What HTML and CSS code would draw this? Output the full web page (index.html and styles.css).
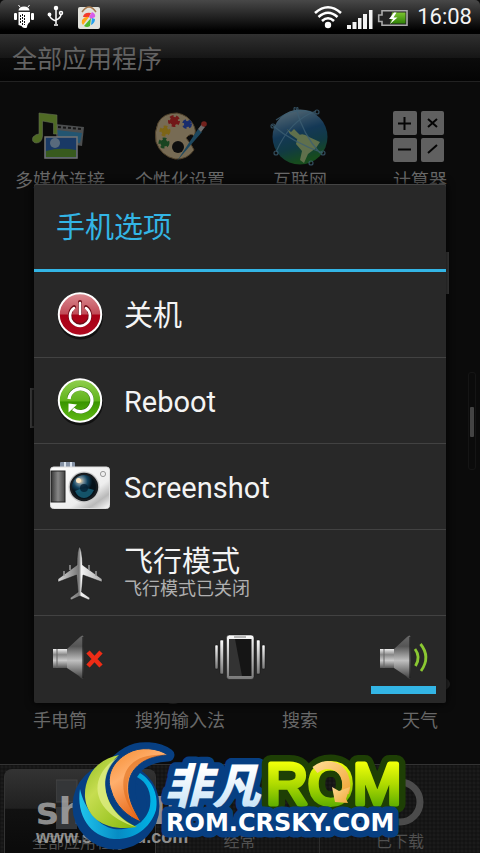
FILE: index.html
```html
<!DOCTYPE html>
<html lang="zh-CN">
<head>
<meta charset="utf-8">
<meta name="viewport" content="width=device-width, initial-scale=1">
<title>手机选项</title>
<link rel="stylesheet" href="styles.css">
</head>
<body>
<header class="status">
  <div class="status-group">
    <svg width="22" height="26" viewBox="13 4 22 26"><g fill="#fff"><path d="M18.500 10.500Q19 6.500 24 6.500Q29 6.500 29.500 10.500Z"/><path d="M18.500 12H30V22Q27 24 27 27.500Q23 29 21.500 26L18.500 25Z"/><rect x="14" y="13" width="3" height="7" rx="1"/><rect x="31" y="13" width="3" height="7" rx="1"/></g><path d="M20 7L18.500 5M28 7L29.500 5" stroke="#fff"/><path d="M20.500 15V24M22.500 14V25M24.500 15V25" stroke="#111" stroke-dasharray="2 1"/></svg>
    <svg width="18" height="26" viewBox="47 4 18 26" fill="none" stroke="#fff" stroke-width="1.500"><path d="M56 8V24M56 21Q50 19 49.500 15M56 20Q61 18 61 14"/><circle cx="56" cy="8" r="1.500" fill="#fff"/><circle cx="49.500" cy="14.500" r="1.200" fill="#fff"/><circle cx="61" cy="13" r="1.500"/><path d="M54 25H58"/></svg>
    <svg width="24" height="26" viewBox="76 4 24 26"><rect x="77" y="7" width="22" height="22" rx="2" fill="#e2e2dc"/><path d="M81 12Q88 2 95 12" fill="none" stroke="#a87b50" stroke-width="1.500"/><path d="M82 17Q83 12 90 13L88 17Z" fill="#f33b2b"/><path d="M88 17L91 12Q95 14 94 17L90 19Z" fill="#d75dea"/><path d="M81 20Q84 16 88 17L82 25Q80 23 81 20Z" fill="#ffa719"/><path d="M83 26L90 18L89 26Q86 28 83 26Z" fill="#4fba2d"/><path d="M90 25L91 18L94 19Q94 23 90 25Z" fill="#27a0ee"/></svg>
  </div>
  <div class="status-group status-right">
    <svg width="30" height="26" viewBox="315 4 30 26"><g fill="none" stroke="#fff" stroke-width="2.600"><path d="M317 13Q330 1.500 343 13"/><path d="M320.500 17Q330 8.500 339.500 17"/><path d="M324 21Q330 15.500 336 21"/></g><circle cx="330" cy="25" r="3.200" fill="#fff"/></svg>
    <svg width="26" height="26" viewBox="349 4 26 26" fill="#f1f1f1"><path d="M349 25h4v4h-4zM354.500 22h4v7h-4zM360 18h3.500v11H360zM365 14h4v15h-4zM371 10h3.500v19H371z"/></svg>
    <svg width="32" height="26" viewBox="378 4 32 26"><defs><linearGradient id="bat" x2="0" y2="1"><stop stop-color="#7cc52f"/><stop offset="1" stop-color="#2f8206"/></linearGradient></defs><path d="M383 10.700H408V25.300H383V21.500H379.700V15H383Z" fill="#222" stroke="#aaa" stroke-width="1.600"/><path d="M393 12.500H406.500V23.500H391Z" fill="url(#bat)"/><path d="M395 12.500L390 19H394L391 24L398.500 17.500H394.500L397.500 12.500Z" fill="#fff"/></svg>
    <time class="clock">16:08</time>
  </div>
</header>
<header class="titlebar"><h1>全部应用程序</h1></header>

<main class="apps">
  <a class="app" href="#">
    <svg width="60" height="60" viewBox="30 107 60 60"><path d="M55 124L84 127L82 146L57 142Z" fill="#8d9093"/><path d="M57 130L82 133L80 143L59 141Z" fill="#3c9ed6"/><path d="M58 127L82 129" stroke="#222" stroke-width="2" stroke-dasharray="3 2"/><path d="M39 113L57 115V134H53.500V123L42.500 121V136Q42 143 36 143Q31 142 33 137Q36 134 39 134Z" fill="#92c83d" stroke="#b9cf98" stroke-width=".600"/><rect x="45" y="137" width="32" height="21" fill="#2868be" stroke="#ddd" stroke-width="1.500"/><circle cx="55" cy="143" r="5" fill="#d8f2ff" opacity=".7"/><path d="M46 151Q60 147 76 150V157H46Z" fill="#65a832"/></svg>
    <span class="label">多媒体连接</span>
  </a>
  <a class="app" href="#">
    <svg width="60" height="60" viewBox="150 107 60 60"><path d="M158 123Q163 113 177 113Q188 115 193 124Q197 131 194 136Q191 132 186 138Q192 145 194 150Q187 160 175 159Q161 156 156 142Q154 132 158 123Z" fill="#e3ca9c" stroke="#957a4d"/><circle cx="178" cy="147" r="6" fill="#111"/><g stroke-width="4" stroke-dasharray="3 2"><circle cx="174" cy="121" r="4" fill="#d82625" stroke="#d82625"/><circle cx="187" cy="124" r="3" fill="#2850cf" stroke="#2850cf"/><circle cx="165" cy="131" r="3.500" fill="#efbe23" stroke="#efbe23"/><circle cx="164" cy="143" r="3.500" fill="#277e37" stroke="#277e37"/></g><path d="M177 161L198 129L202 132Z" fill="#2f83b1"/><path d="M198 129L202 124L205 127L201 132Z" fill="#ccc"/><circle cx="204" cy="124" r="2.800" fill="#d8372d"/></svg>
    <span class="label">个性化设置</span>
  </a>
  <a class="app" href="#">
    <svg width="60" height="60" viewBox="270 107 60 60"><defs><linearGradient id="globe" x2=".3" y2="1"><stop stop-color="#b6d5e6"/><stop offset=".5" stop-color="#1d66a0"/><stop offset=".75" stop-color="#176a7c"/><stop offset="1" stop-color="#238c31"/></linearGradient></defs><circle cx="300" cy="137" r="27.500" fill="url(#globe)"/><path d="M287 129L291 132L294 129L300 135L297 139L290 134ZM298 136Q302 132 309 137L320 142L316 148L308 154L304 163L300 160L302 151L296 144Z" fill="#b4d48c"/><g fill="none" stroke="#6db0d8" stroke-width="1.200" opacity=".8"><path d="M272 125Q292 142 323 153M296 108Q303 135 320 153M316 111Q290 120 276 152M276 120Q296 105 317 114"/><circle cx="296" cy="109" r="2"/><circle cx="317" cy="112" r="2"/><circle cx="273" cy="126" r="2"/><circle cx="323" cy="153" r="2"/><circle cx="276" cy="153" r="2"/><circle cx="311" cy="163" r="2"/></g></svg>
    <span class="label">互联网</span>
  </a>
  <a class="app" href="#">
    <svg width="60" height="60" viewBox="390 107 60 60"><g fill="#b5b5b5"><rect x="393" y="111" width="24" height="24" rx="2"/><rect x="421" y="111" width="23" height="24" rx="2"/><rect x="393" y="138" width="24" height="24" rx="2"/><rect x="421" y="138" width="23" height="24" rx="2"/></g><path d="M398 123.500H411M404.500 117V130M428 119L437 127M437 119L428 127M398 149.500H411M428 153L437 145" stroke="#000" stroke-width="2"/></svg>
    <span class="label">计算器</span>
  </a>
  <span class="app row2-end"><svg width="60" height="60" viewBox="0 0 60 60"><rect x="10" y="10" width="49" height="42" fill="#777"/></svg></span>
  <span class="app row3-start"><svg width="60" height="60" viewBox="0 0 60 60"><rect x="1" y="12" width="50" height="38" fill="#333" stroke="#777" stroke-width="2"/></svg></span>
  <a class="app row5 col1" href="#"><svg width="60" height="60" viewBox="0 0 60 60"><rect x="20" y="8" width="20" height="40" fill="#666"/></svg><span class="label">手电筒</span></a>
  <a class="app row5 col2" href="#"><svg width="60" height="60" viewBox="0 0 60 60"><ellipse cx="23" cy="40" rx="15" ry="17" fill="#555"/></svg><span class="label">搜狗输入法</span></a>
  <a class="app row5 col3" href="#"><svg width="60" height="60" viewBox="0 0 60 60"><circle cx="30" cy="25" r="18" fill="none" stroke="#666" stroke-width="5"/></svg><span class="label">搜索</span></a>
  <a class="app row5 col4" href="#"><svg width="60" height="60" viewBox="0 0 60 60"><ellipse cx="38" cy="37" rx="22" ry="10" fill="#444"/></svg><span class="label">天气</span></a>
  <div class="scroll-track"><div class="scroll-thumb"></div></div>
</main>

<nav class="tabs">
  <button class="tab active"><svg width="48" height="60" viewBox="0 0 48 60"><rect x="0" y="9" width="21" height="22" fill="#343638" stroke="#444"/><rect x="0" y="36" width="21" height="22" fill="#343638"/></svg><span>全部应用程序</span></button>
  <button class="tab"><svg width="48" height="60" viewBox="0 0 48 60"><circle cx="24" cy="32" r="20" fill="none" stroke="#3d3d3d" stroke-width="6"/></svg><span>经常</span></button>
  <button class="tab"><svg width="48" height="60" viewBox="0 0 48 60"><circle cx="24" cy="32" r="20" fill="none" stroke="#4b4b4b" stroke-width="7"/></svg><span>已下载</span></button>
</nav>

<div class="overlay">
  <section class="dialog" role="dialog" aria-labelledby="dialog-title">
    <h2 id="dialog-title">手机选项</h2>
    <button class="option">
      <svg width="60" height="60" viewBox="50 285 60 60"><defs><linearGradient id="red" x2="0" y2="1"><stop stop-color="#dc8c93"/><stop offset=".48" stop-color="#c14b57"/><stop offset=".52" stop-color="#a90016"/><stop offset="1" stop-color="#b00a20"/></linearGradient></defs><circle cx="80.500" cy="316" r="22.500" fill="#111"/><circle cx="80" cy="313.500" r="21.200" fill="url(#red)" stroke="#fff" stroke-width="2"/><g fill="none" stroke-linecap="round"><path d="M74 306A10 10 0 1 0 86 306M80 301V312" stroke="#6e0d18" stroke-width="4"/><path d="M74 307A10 10 0 1 0 86 307M80 302V313" stroke="#fff" stroke-width="2.600"/></g></svg>
      <span class="option-text">关机</span>
    </button>
    <button class="option">
      <svg width="60" height="60" viewBox="50 371 60 60"><defs><linearGradient id="green" x2="0" y2="1"><stop stop-color="#91cf4f"/><stop offset=".5" stop-color="#62b41c"/><stop offset=".54" stop-color="#3a9500"/><stop offset="1" stop-color="#62ba16"/></linearGradient></defs><circle cx="80.500" cy="402" r="22.500" fill="#111"/><circle cx="80" cy="399.500" r="21.200" fill="url(#green)" stroke="#fff" stroke-width="2"/><path d="M69 397A11.500 11.500 0 1 1 73 408" fill="none" stroke="#286409" stroke-width="4"/><path d="M69 398A11.500 11.500 0 1 1 73 408" fill="none" stroke="#fff" stroke-width="3.400"/><path d="M68.500 402.500L77 403.500L68.500 411.500Z" fill="#fff"/></svg>
      <span class="option-text">Reboot</span>
    </button>
    <button class="option">
      <svg width="60" height="60" viewBox="50 458 60 60"><defs><linearGradient id="body" x2="1" y2="1"><stop stop-color="#fff"/><stop offset=".65" stop-color="#eee"/><stop offset=".82" stop-color="#b9b9b9"/><stop offset="1" stop-color="#fff"/></linearGradient><radialGradient id="lens" cx=".35" cy=".25"><stop stop-color="#f4d9ab"/><stop offset=".3" stop-color="#6c8796"/><stop offset=".6" stop-color="#12435f"/><stop offset="1" stop-color="#06121a"/></radialGradient><linearGradient id="grip"><stop stop-color="#333"/><stop offset=".5" stop-color="#888"/><stop offset="1" stop-color="#444"/></linearGradient></defs><rect x="60" y="462" width="15" height="7" rx="1" fill="#8592a5"/><path d="M65 462V467M71 462V467" stroke="#d9e2ed" stroke-width="2"/><rect x="50.500" y="467" width="59" height="41.500" rx="3" fill="url(#body)" stroke="#ddd"/><rect x="51" y="471" width="14" height="31" fill="url(#grip)" stroke="#222"/><circle cx="84" cy="487" r="15.500" fill="#c9c9c9"/><circle cx="84" cy="487" r="14.200" fill="#181c20"/><circle cx="84" cy="487" r="12" fill="url(#lens)"/><path d="M75 491Q84 486 94 490Q90 498 84 498Q78 498 75 491Z" fill="#1b6f8c" opacity=".7"/><circle cx="84" cy="488" r="4" fill="#051f32" opacity=".8"/><circle cx="78.500" cy="480.500" r="2.500" fill="#ffe9c6"/><circle cx="103" cy="474" r="2.600" fill="#eee" stroke="#999"/></svg>
      <span class="option-text">Screenshot</span>
    </button>
    <button class="option">
      <svg width="60" height="60" viewBox="50 544 60 60"><defs><linearGradient id="plane"><stop stop-color="#d8d8d8"/><stop offset=".48" stop-color="#777"/><stop offset=".53" stop-color="#f4f4f4"/><stop offset="1" stop-color="#aaa"/></linearGradient></defs><path d="M79.500 546.500Q82 550 82.500 565L102 579V582L83 575L81.500 592L90 598L89 600L80 596L71 600L70 598L78 592L76.500 575L58 582V579L77 565Q77 550 79.500 546.500Z" fill="url(#plane)" stroke="#111" stroke-width=".500"/><path d="M70 565V570M64 571V576M89 565V570M96 571V576" stroke="#999" stroke-width="1.500"/></svg>
      <span class="option-text">飞行模式<small>飞行模式已关闭</small></span>
    </button>
    <div class="sounds">
      <button class="sound" aria-label="静音">
        <svg width="65" height="60" viewBox="44 629 65 60"><defs><linearGradient id="horn" x2="0" y2="1"><stop stop-color="#686868"/><stop offset=".25" stop-color="#555"/><stop offset=".58" stop-color="#c0c0c0"/><stop offset="1" stop-color="#3d3d3d"/></linearGradient><linearGradient id="coil" x2="0" y2="1"><stop stop-color="#eee"/><stop offset=".3" stop-color="#888"/><stop offset=".6" stop-color="#ccc"/><stop offset="1" stop-color="#555"/></linearGradient></defs><rect x="53" y="650" width="15" height="19" fill="url(#coil)"/><path d="M57 650V669" stroke="#666"/><path d="M67 650L80 638Q83 635 83.500 638V679Q82 681 79 677L67 669Z" fill="url(#horn)"/><path d="M83 638V679" stroke="#111"/><path d="M88 653L101 667M101 653L88 667" stroke="#ee2c16" stroke-width="4.500"/></svg>
      </button>
      <button class="sound" aria-label="振动">
        <svg width="65" height="60" viewBox="208 627 65 60"><defs><linearGradient id="bars" x2="0" y2="1"><stop stop-color="#fff"/><stop offset="1" stop-color="#777"/></linearGradient></defs><g fill="url(#bars)" stroke="#111" stroke-width=".500"><rect x="215" y="644" width="3" height="24" rx="1"/><rect x="220" y="639" width="3.500" height="34" rx="1"/><rect x="256.500" y="639" width="3.500" height="34" rx="1"/><rect x="262" y="644" width="3" height="24" rx="1"/><rect x="226.500" y="634" width="27.500" height="44.500" rx="3"/></g><rect x="229" y="638" width="22.500" height="37" fill="#151515"/><path d="M229 638H235L242 675H229Z" fill="#333"/><path d="M234 636H246" stroke="#777"/></svg>
      </button>
      <button class="sound selected" aria-label="响铃">
        <svg width="65" height="60" viewBox="371 629 65 60"><rect x="380" y="650" width="15" height="19" fill="url(#coil)"/><path d="M384 650V669" stroke="#666"/><path d="M394 650L407 638Q410 635 410.500 638V679Q409 681 406 677L394 669Z" fill="url(#horn)"/><path d="M410 638V679" stroke="#111"/><path d="M415 650Q421 658 415.500 667M420.500 645Q431 658 421 672" fill="none" stroke="#8bc832" stroke-width="2.800"/></svg>
      </button>
    </div>
  </section>
</div>

<div class="watermark"><b>shendu</b><span>www.shendu.com</span></div>
<svg class="brand" width="342" height="113" viewBox="70 740 342 113" role="img" aria-label="非凡ROM">
  <defs>
    <linearGradient id="leaf" x2=".8" y2="1"><stop stop-color="#91bb20"/><stop offset=".4" stop-color="#c6dd50"/><stop offset="1" stop-color="#8dbd15"/></linearGradient>
    <linearGradient id="flame" x2=".5" y2="1"><stop stop-color="#f58a2c"/><stop offset=".4" stop-color="#ffaf6d"/><stop offset="1" stop-color="#e45f0e"/></linearGradient>
    <linearGradient id="ring" x2="1"><stop stop-color="#20c5ed"/><stop offset=".5" stop-color="#078cc4"/><stop offset="1" stop-color="#00b5e8"/></linearGradient>
    <linearGradient id="ice" x2="0" y2="1"><stop offset=".3" stop-color="#fff"/><stop offset="1" stop-color="#b9dcf5"/></linearGradient>
    <linearGradient id="lime" gradientUnits="userSpaceOnUse" x1="0" y1="763" x2="0" y2="807"><stop stop-color="#efff09"/><stop offset=".5" stop-color="#acd900"/><stop offset="1" stop-color="#5cac00"/></linearGradient>
    <linearGradient id="cream" x2="1" y2="1"><stop stop-color="#ffd98e"/><stop offset="1" stop-color="#f1a83c"/></linearGradient>
  </defs>
  <g fill="#073f82" stroke="#073f82" stroke-width="13" stroke-linejoin="round">
    <circle cx="116" cy="806" r="37"/>
    <path d="M168 755C158 748 140 746 128 753C112 762 106 776 111 790L141 822C133 808 127 798 129 782C131 768 144 756 168 755Z"/>
  </g>
  <path d="M140 773C152 780 159 795 156 810C150 830 132 840 114 839C90 837 76 815 80 789C84 808 98 826 114 829C132 831 147 822 150 806C152 793 147 782 137 777Z" fill="url(#ring)"/>
  <path d="M119 755C95 760 84 778 85 797C87 820 108 832 137 827C116 818 104 800 105 780C106 770 111 762 119 755Z" fill="url(#leaf)"/>
  <path d="M118 757C86 777 91 813 136 827C106 814 94 779 118 757Z" fill="#e2ef89" opacity=".75"/>
  <path d="M168 755C158 748 140 746 128 753C112 762 106 776 111 790C115 806 128 817 141 822C133 808 127 798 129 782C131 768 144 756 168 755Z" fill="url(#flame)" stroke="#073f82" stroke-width="1"/>
  <path d="M166 755C119 751 112 790 139 820C121 797 119 760 166 755Z" fill="#d9640f" opacity=".5"/>
  <text class="brand-cn" x="164" y="804" fill="url(#ice)" stroke="#073f82" stroke-width="13" stroke-linejoin="round" paint-order="stroke">非凡</text>
  <text class="brand-rom" x="266" y="804" fill="url(#lime)" stroke="#1e3f05" stroke-width="18" stroke-linejoin="round" paint-order="stroke">ROM</text>
  <text class="brand-rom" x="266" y="804" fill="url(#lime)" stroke="url(#lime)" stroke-width="5" stroke-linejoin="round" aria-hidden="true">ROM</text>
  <path d="M315 770C325 762 338 764 344 775Q348 784 345 793" fill="none" stroke="url(#cream)" stroke-width="8"/>
  <path d="M332 787L339 791L350 787L346 799L348 803L335 802Z" fill="url(#cream)"/>
  <text class="brand-url" x="166" y="831" fill="#fff" stroke="#073f82" stroke-width="13" stroke-linejoin="round" paint-order="stroke">ROM.CRSKY.COM</text>
</svg>
</body>
</html>
```
FILE: styles.css
```css
* { box-sizing: border-box; }

body {
  margin: 0;
  position: relative;
  min-height: 100vh;
  display: flex;
  flex-direction: column;
  overflow-x: hidden;
  background: #0b0b0b;
  color: #686868;
  font-family: Roboto, "Noto Sans CJK SC", sans-serif;
}

h1, h2 { margin: 0; font-weight: 400; }
svg { display: block; flex: none; }
a { color: inherit; text-decoration: none; }
button {
  margin: 0;
  padding: 0;
  border: 0;
  background: none;
  color: inherit;
  font: inherit;
}

.status {
  height: 34px;
  padding: 0 8px 0 13px;
  display: flex;
  align-items: center;
  justify-content: space-between;
  background: linear-gradient(#484848, #252525 45%, #000 90%);
  border-radius: 5px 5px 0 0;
}
.status-group { display: flex; align-items: center; gap: 12px; }
.status-right { gap: 4px; }
.clock {
  margin-left: 4px;
  color: #f4f4f4;
  font-size: 22px;
  line-height: 34px;
}

.titlebar {
  height: 48px;
  padding: 2px 12px 0;
  background: linear-gradient(#303030, #161616 50%, #0b0b0b 51%, #040404);
  border-bottom: 1px solid #222;
}
.titlebar h1 { font-size: 25px; line-height: 48px; color: #636363; }

.apps {
  position: relative;
  flex: 1;
  padding-top: 25px;
  display: grid;
  grid-template-columns: repeat(4, 1fr);
  grid-auto-rows: 84px;
  row-gap: 51px;
}
.app { display: flex; flex-direction: column; align-items: center; }
.app svg { opacity: 0.5; }
.label { font-size: 18px; line-height: 27px; white-space: nowrap; }
.row2-end { grid-row: 2; grid-column: 4; }
.row3-start { grid-row: 3; grid-column: 1; }
.row5 { grid-row: 5; }
.col1 { grid-column: 1; }
.col2 { grid-column: 2; }
.col3 { grid-column: 3; }
.col4 { grid-column: 4; }

.scroll-track {
  position: absolute;
  right: 4px;
  top: 290px;
  width: 8px;
  height: 98px;
  padding: 34px 1px 0;
  border: 1px solid #151515;
  border-radius: 3px;
}
.scroll-thumb { width: 4px; height: 30px; background: #444; border-radius: 1px; }

.tabs {
  height: 89px;
  display: grid;
  grid-template-columns: repeat(3, 1fr);
  border-top: 1px solid #333;
  background: radial-gradient(circle, #1b1b1b 1px, #131313 2px) 0 0 / 4px 4px;
}
.tab {
  display: flex;
  flex-direction: column;
  align-items: center;
  padding-top: 5px;
  border-right: 1px solid #2c2c2c;
  font-size: 16px;
  line-height: 24px;
  color: #505050;
}
.tab:last-child { border-right: 0; }
.tab.active {
  margin: 4px 4px 0;
  padding-top: 1px;
  border: 1px solid #333;
  border-bottom: 0;
  border-radius: 8px 8px 0 0;
  background: linear-gradient(#333, #202020 45%, #111 46%, #0a0a0a);
}

.overlay {
  position: absolute;
  inset: 34px 0 0;
  padding: 0 34px;
  display: flex;
  align-items: center;
}
.dialog {
  flex: 1;
  background: #282828;
  border-radius: 2px;
  box-shadow: 0 0 8px #000, inset 0 1px #444;
}
.dialog h2 {
  padding: 4px 22px 0;
  border-bottom: 3px solid #33b5e5;
  color: #33b5e5;
  font-size: 29px;
  line-height: 81px;
}
.option {
  width: 100%;
  height: 86px;
  padding: 2px 16px 0;
  display: flex;
  align-items: center;
  gap: 14px;
  border-bottom: 1px solid #424242;
  color: #f4f4f4;
  text-align: left;
}
.option-text { font-size: 29px; line-height: 30px; }
.option-text small {
  display: block;
  color: #b0b0b0;
  font-size: 18px;
  line-height: 24px;
}
.sounds {
  height: 87px;
  padding: 0 10px;
  display: flex;
  justify-content: space-between;
}
.sound {
  width: 65px;
  height: 78px;
  padding-top: 12px;
  border-bottom: 8px solid transparent;
}
.sound.selected { border-bottom-color: #33b5e5; }

.watermark {
  position: absolute;
  left: 36px;
  bottom: 6px;
  display: flex;
  flex-direction: column;
  color: rgba(175, 175, 175, 0.8);
}
.watermark b { font: 700 38px/32px "DejaVu Sans", sans-serif; }
.watermark span { font: 700 18px/20px "Liberation Sans", sans-serif; }

.brand { position: absolute; left: 70px; bottom: 0; }
.brand-cn { font: italic 900 48px "Noto Sans CJK SC", sans-serif; }
.brand-url { font: 700 24px "DejaVu Sans", sans-serif; }
.brand-rom { font: 400 58px "Liberation Sans", sans-serif; }
```
